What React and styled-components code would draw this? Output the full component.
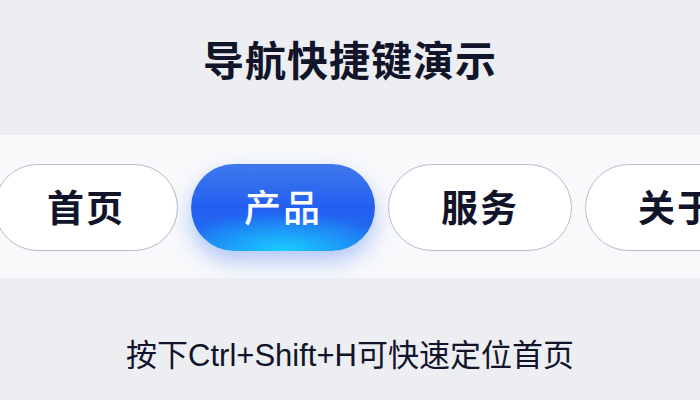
import React from 'react';
import styled, { createGlobalStyle } from 'styled-components';

const Global = createGlobalStyle`
  html, body {
    margin: 0;
    padding: 0;
    background: #eceef2;
  }
  body {
    font-family: "Noto Sans CJK SC", "Noto Sans", sans-serif;
    color: #12142a;
  }
`;

const Page = styled.div`
  width: 700px;
  height: 400px;
  overflow: hidden;
  display: flex;
  flex-direction: column;
  background: #eceef2;
`;

const Title = styled.h1`
  margin: 0;
  height: 135px;
  display: flex;
  align-items: center;
  justify-content: center;
  padding-bottom: 20px;
  box-sizing: border-box;
  font-size: 41px;
  font-weight: 700;
  letter-spacing: 1px;
  color: #12142a;
`;

const Band = styled.nav`
  height: 143px;
  background: #f8f9fb;
  display: flex;
  align-items: center;
  gap: 13px;
  margin-left: -6px;
  padding-top: 1px;
  box-sizing: border-box;
`;

const Tab = styled.button`
  flex: 0 0 auto;
  width: 184px;
  height: 87px;
  border-radius: 44px;
  box-sizing: border-box;
  font-family: "Noto Sans CJK SC", sans-serif;
  font-size: 37px;
  letter-spacing: 2px;
  display: flex;
  align-items: center;
  justify-content: center;
  cursor: pointer;
  padding: 0 0 2px;
  border: ${p => (p.$active ? 'none' : '1.5px solid #b7bccb')};
  font-weight: ${p => (p.$active ? 500 : 700)};
  color: ${p => (p.$active ? '#ffffff' : '#12142a')};
  background: ${p =>
    p.$active
      ? 'radial-gradient(ellipse 60% 45% at 50% 100%, rgba(24, 210, 255, 0.95), rgba(24, 190, 255, 0) 100%), linear-gradient(180deg, #3f78ee 0%, #2360f0 50%, #1f72f4 100%)'
      : '#ffffff'};
  box-shadow: ${p =>
    p.$active ? '0 10px 22px rgba(40, 100, 240, 0.35)' : 'none'};
`;

const Hint = styled.p`
  margin: 0;
  flex: 1;
  display: flex;
  align-items: center;
  justify-content: center;
  padding-top: 26px;
  font-family: "Liberation Sans", "Noto Sans CJK SC", sans-serif;
  font-size: 31px;
  font-weight: 400;
  color: #12142a;
`;

const tabs = ['首页', '产品', '服务', '关于'];

export default function App() {
  return (
    <Page>
      <Global />
      <Title>导航快捷键演示</Title>
      <Band>
        {tabs.map((t, i) => (
          <Tab key={t} $active={i === 1}>
            {t}
          </Tab>
        ))}
      </Band>
      <Hint>按下Ctrl+Shift+H可快速定位首页</Hint>
    </Page>
  );
}
